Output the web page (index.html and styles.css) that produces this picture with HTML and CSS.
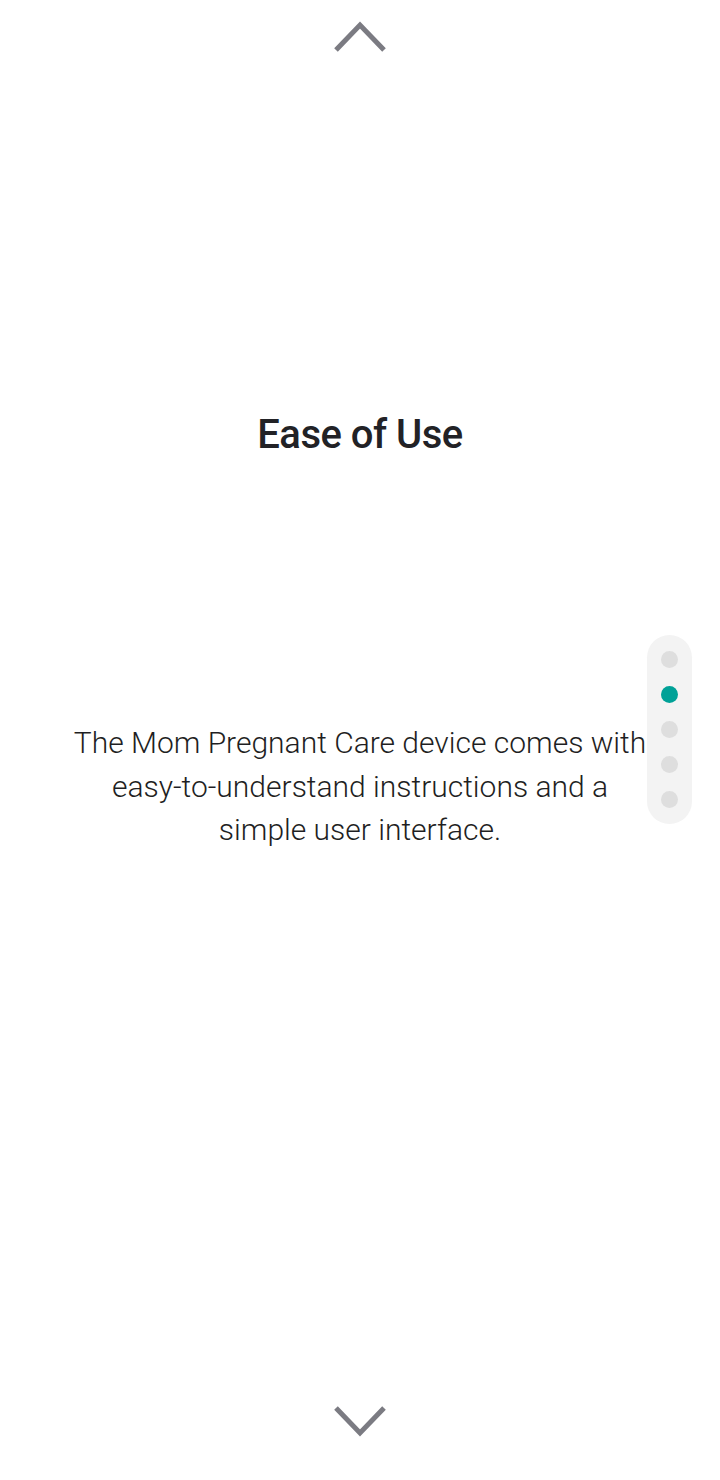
FILE: index.html
```html
<!DOCTYPE html>
<html lang="en">
<head>
<meta charset="utf-8">
<title>Ease of Use</title>
<link rel="stylesheet" href="styles.css">
</head>
<body>
<main class="page">
  <button class="nav nav-up" aria-label="Previous">
    <svg width="60" height="40" viewBox="0 0 60 40"><polyline points="6,32 30,7 54,32" fill="none" stroke="#7b7b82" stroke-width="5"/></svg>
  </button>
  <section class="slide">
    <h2 class="title">Ease of Use</h2>
    <p class="desc">The Mom Pregnant Care device comes with easy-to-understand instructions and a simple user interface.</p>
  </section>
  <button class="nav nav-down" aria-label="Next">
    <svg width="60" height="40" viewBox="0 0 60 40"><polyline points="6,10 30,35 54,10" fill="none" stroke="#7b7b82" stroke-width="5"/></svg>
  </button>
  <nav class="dots">
    <span class="dot"></span>
    <span class="dot active"></span>
    <span class="dot"></span>
    <span class="dot"></span>
    <span class="dot"></span>
  </nav>
</main>
</body>
</html>
```
FILE: styles.css
```css
* { box-sizing: border-box; }
html, body { margin: 0; padding: 0; background: #fff; }
body { font-family: "Roboto", "Liberation Sans", sans-serif; color: #222226; }
.page {
  position: relative;
  width: 720px;
  height: 1480px;
  display: flex;
  flex-direction: column;
  align-items: center;
}
.nav {
  border: 0;
  background: none;
  padding: 0;
  width: 60px;
  height: 40px;
  display: block;
  cursor: pointer;
}
.nav svg { display: block; }
.nav-up { margin-top: 18px; margin-left: -1px; }
.slide {
  flex: 1;
  width: 584px;
  display: flex;
  flex-direction: column;
  align-items: center;
  text-align: center;
}
.title {
  margin: 353px 0 0;
  font-size: 40px;
  line-height: 48px;
  font-weight: 500;
  letter-spacing: -0.5px;
  color: #222226;
}
.desc {
  margin: 262px 0 0;
  font-size: 30px;
  line-height: 43.5px;
  font-weight: 300;
  color: #1f1f23;
}
.nav-down { margin-bottom: 42px; margin-left: -1px; }
.dots {
  position: absolute;
  left: 647px;
  top: 635px;
  width: 45px;
  padding: 16px 14px;
  background: #f3f3f3;
  border-radius: 23px;
  display: flex;
  flex-direction: column;
  gap: 18px;
}
.dot {
  width: 17px;
  height: 17px;
  border-radius: 50%;
  background: #dedede;
}
.dot.active { background: #00a197; }
```
